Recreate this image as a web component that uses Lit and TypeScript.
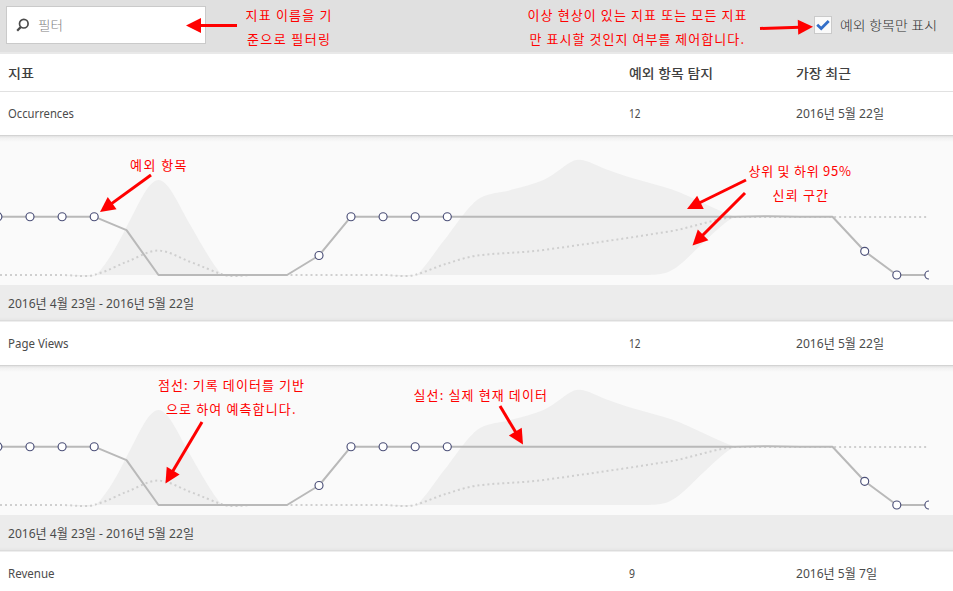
import { LitElement, html, svg, css } from "lit";
import { customElement, property } from "lit/decorators.js";

interface Metric { name: string; count: string; recent: string; width: number; dateWidth: number; }
interface Note { text: string; x: number; y: number; width: number; }

const METRICS: Metric[] = [
  { name: "Occurrences", count: "12", recent: "2016년 5월 22일", width: 66, dateWidth: 88 },
  { name: "Page Views", count: "12", recent: "2016년 5월 22일", width: 60.5, dateWidth: 88 },
  { name: "Revenue", count: "9", recent: "2016년 5월 7일", width: 46.5, dateWidth: 81 },
];

const NOTES: Note[] = [
  { text: "지표 이름을 기", x: 245.5, y: 20, width: 86 },
  { text: "준으로 필터링", x: 247, y: 44, width: 83 },
  { text: "이상 현상이 있는 지표 또는 모든 지표", x: 527.5, y: 20, width: 219 },
  { text: "만 표시할 것인지 여부를 제어합니다.", x: 529.5, y: 44, width: 214.5 },
  { text: "예외 항목", x: 130, y: 170, width: 56.5 },
  { text: "상위 및 하위 95%", x: 748.5, y: 176, width: 102.5 },
  { text: "신뢰 구간", x: 772.5, y: 199.5, width: 55.5 },
  { text: "점선: 기록 데이터를 기반", x: 158, y: 390, width: 146 },
  { text: "으로 하여 예측합니다.", x: 166, y: 414, width: 129.5 },
  { text: "실선: 실제 현재 데이터", x: 413.5, y: 400, width: 133.5 },
];

// Each arrow runs from its tail (x1, y1) to its tip (x2, y2).
const ARROWS = [
  [237, 25.5, 186, 25.5],
  [760, 28.5, 813, 26.8],
  [151, 175, 100, 212],
  [746, 180, 687, 209],
  [745, 193, 692.5, 245.5],
  [202, 422, 165.5, 483.5],
  [500, 406, 523, 444.5],
];

const CIRCLES = [
  [-2.1, 81.7], [30, 81.7], [62.1, 81.7], [94.2, 81.7], [319, 120.5], [351, 81.7],
  [383.1, 81.7], [415.2, 81.7], [447.3, 81.7], [864.7, 116.3], [896.8, 140], [928.9, 140],
];

/** Single-line text fitted to a given width. */
@customElement("fitted-text")
export class FittedText extends LitElement {
  @property() text = "";
  @property({ type: Number }) width = 0;
  @property({ type: Number }) weight = 400;
  static styles = css`
    :host { display: block; line-height: 0; }
    svg { display: block; overflow: visible; height: 20px; }
    text { font-family: "Noto Sans", "Noto Sans CJK KR", sans-serif; font-size: 12.7px; fill: currentColor; }
  `;
  render() {
    return html`<svg width=${this.width}>
      <text x="0" y="15" textLength=${this.width} lengthAdjust="spacingAndGlyphs" font-weight=${this.weight}>${this.text}</text>
    </svg>`;
  }
}

@customElement("anomaly-chart")
export class AnomalyChart extends LitElement {
  static styles = css`
    :host { display: block; height: 150px; background: linear-gradient(#d3d3d3 0 1px, #e2e2e2 1px, #f1f1f1 3px, #fafafa 7px); }
    svg { display: block; overflow: hidden; }
    .band { fill: #efefef; }
    .forecast { fill: none; stroke: #cfcfcf; stroke-width: 2; stroke-dasharray: 2 3; }
    .actual { fill: none; stroke: #b9b9b9; stroke-width: 2; stroke-linejoin: round; }
    .point { fill: #fff; stroke: #4b4f78; stroke-width: 1.15; }
  `;
  render() {
    return html`<svg width="929" height="150">
      <path class="band" d="M65 140C80 141.5 92 143 97 139C109 126 118 109 126.500 92C137 73 148 45 158.500 45C169 45 180 73 191.500 92C201 109 212 128 221 139C227 143 240 141.500 255 140Z"/>
      <path class="band" d="M383 140C398 141 411 143 418 139C430 126 438 112 447.500 101C457 88 470 69 480 63C490 57 502 58 512 54.500C523 52 534 49 543.500 45C555 40 565 29 574 25.500C584 22 598 32 608 35C629 43 651 48 672 54.500C693 62 716 75 735 81.700C724 87 715 97 704 107C694 116 682 130 672 135C662 141 651 140 608 140Z"/>
      <path class="forecast" d="M0 140H62C75 140 88 143 97 139C108 136 118 130 126.500 127C137 123 148 115.500 158.500 115.500C169 116 180 123 190.500 127C202 131 212 136 221 139C230 143 243 140 255 140H383C395 140 408 143 418 139C428 136 438 131 447.500 128.500C458 125 470 121 480 120.300C502 117.500 522 118 543.500 115C587 109 629 103 672 96C694 92 713 84 735 82H929"/>
      <path class="actual" d="M0 81.700H94.200L126.500 95.200L158.500 140H287L319 120.500L351 81.700H735L768 81.300L800 81.700H832.500L864.700 116.300L896.800 140H929"/>
      ${CIRCLES.map(([x, y]) => svg`<circle class="point" cx=${x} cy=${y} r="4"/>`)}
    </svg>`;
  }
}

@customElement("app-root")
export class AppRoot extends LitElement {
  static styles = css`
    :host { display: block; position: relative; width: 953px; height: 591px; overflow: hidden; background: #fff; color: #4b4b4b; font-family: "Noto Sans", "Noto Sans CJK KR", sans-serif; }
    .toolbar { box-sizing: border-box; height: 54px; padding: 6px 16px 0 6px; display: flex; justify-content: space-between; background: #e0e0e0; border-bottom: 2px solid #e9e9e9; }
    .filter { box-sizing: border-box; width: 200px; height: 38px; padding-left: 9px; display: flex; align-items: center; gap: 8px; background: #fff; border: 1px solid #cacaca; color: #808080; }
    .filter svg { display: block; flex: none; }
    .toggle { height: 38px; display: flex; align-items: center; gap: 8px; color: #303030; }
    .box { box-sizing: border-box; width: 18px; height: 18px; border: 1px solid #cacaca; background: #fafafa; }
    .box svg { display: block; }
    .grid { display: grid; grid-template-columns: 621px 167px 1fr; align-items: center; padding-left: 8px; }
    .head { height: 37px; border-bottom: 1px solid #e1e1e1; color: #404040; }
    .row { box-sizing: border-box; height: 43px; padding-bottom: 1px; background: #fff; }
    .range { box-sizing: border-box; height: 37px; padding: 8px 8px 0; background: linear-gradient(#ececec 32px, #e6e6e6 35px, #dcdcdc 35px 36px, #eee 36px); }
    .notes { position: absolute; inset: 0; pointer-events: none; }
    .notes text { font-family: "Noto Sans CJK KR", sans-serif; font-weight: 400; font-size: 13px; fill: #f00; }
    .shaft { stroke: #f00; stroke-width: 3; }
    .tip { fill: #f00; }
  `;

  private arrow([x1, y1, x2, y2]: number[]) {
    const length = Math.hypot(x2 - x1, y2 - y1);
    const angle = (Math.atan2(y2 - y1, x2 - x1) * 180) / Math.PI;
    return svg`<g transform="translate(${x2} ${y2}) rotate(${angle})">
      <path class="shaft" d="M${-length} 0H-13"/><path class="tip" d="M0 0L-15 -7.500V7.500Z"/></g>`;
  }

  private metricRow(m: Metric) {
    return html`<div class="grid row">
      <fitted-text .text=${m.name} .width=${m.width}></fitted-text>
      <fitted-text .text=${m.count} .width=${m.count.length * 5.5 + 0.5}></fitted-text>
      <fitted-text .text=${m.recent} .width=${m.dateWidth}></fitted-text>
    </div>`;
  }

  render() {
    return html`
      <div class="toolbar">
        <div class="filter">
          <svg width="14" height="14" fill="none" stroke="#4b4b4b">
            <circle cx="7.800" cy="5.700" r="4.300" stroke-width="1.700"/><path d="M4.800 9L1.200 12.800" stroke-width="2.300"/>
          </svg>
          <fitted-text .text=${"필터"} .width=${25} .weight=${300}></fitted-text>
        </div>
        <div class="toggle">
          <div class="box"><svg width="16" height="16"><path d="M2.200 7.800L6.200 11.500L13.700 4" fill="none" stroke="#326ec8" stroke-width="2.800"/></svg></div>
          <fitted-text .text=${"예외 항목만 표시"} .width=${97} .weight=${300}></fitted-text>
        </div>
      </div>
      <div class="grid head">
        <fitted-text .text=${"지표"} .width=${26} .weight=${500}></fitted-text>
        <fitted-text .text=${"예외 항목 탐지"} .width=${84} .weight=${500}></fitted-text>
        <fitted-text .text=${"가장 최근"} .width=${55} .weight=${500}></fitted-text>
      </div>
      ${METRICS.map((m, i) => html`${this.metricRow(m)}${i < 2
        ? html`<anomaly-chart></anomaly-chart>
            <div class="range"><fitted-text .text=${"2016년 4월 23일 - 2016년 5월 22일"} .width=${186}></fitted-text></div>`
        : ""}`)}
      <svg class="notes" width="953" height="591">
        ${NOTES.map((n) => svg`<text x=${n.x} y=${n.y} textLength=${n.width}>${n.text}</text>`)}
        ${ARROWS.map((a) => this.arrow(a))}
      </svg>`;
  }
}
